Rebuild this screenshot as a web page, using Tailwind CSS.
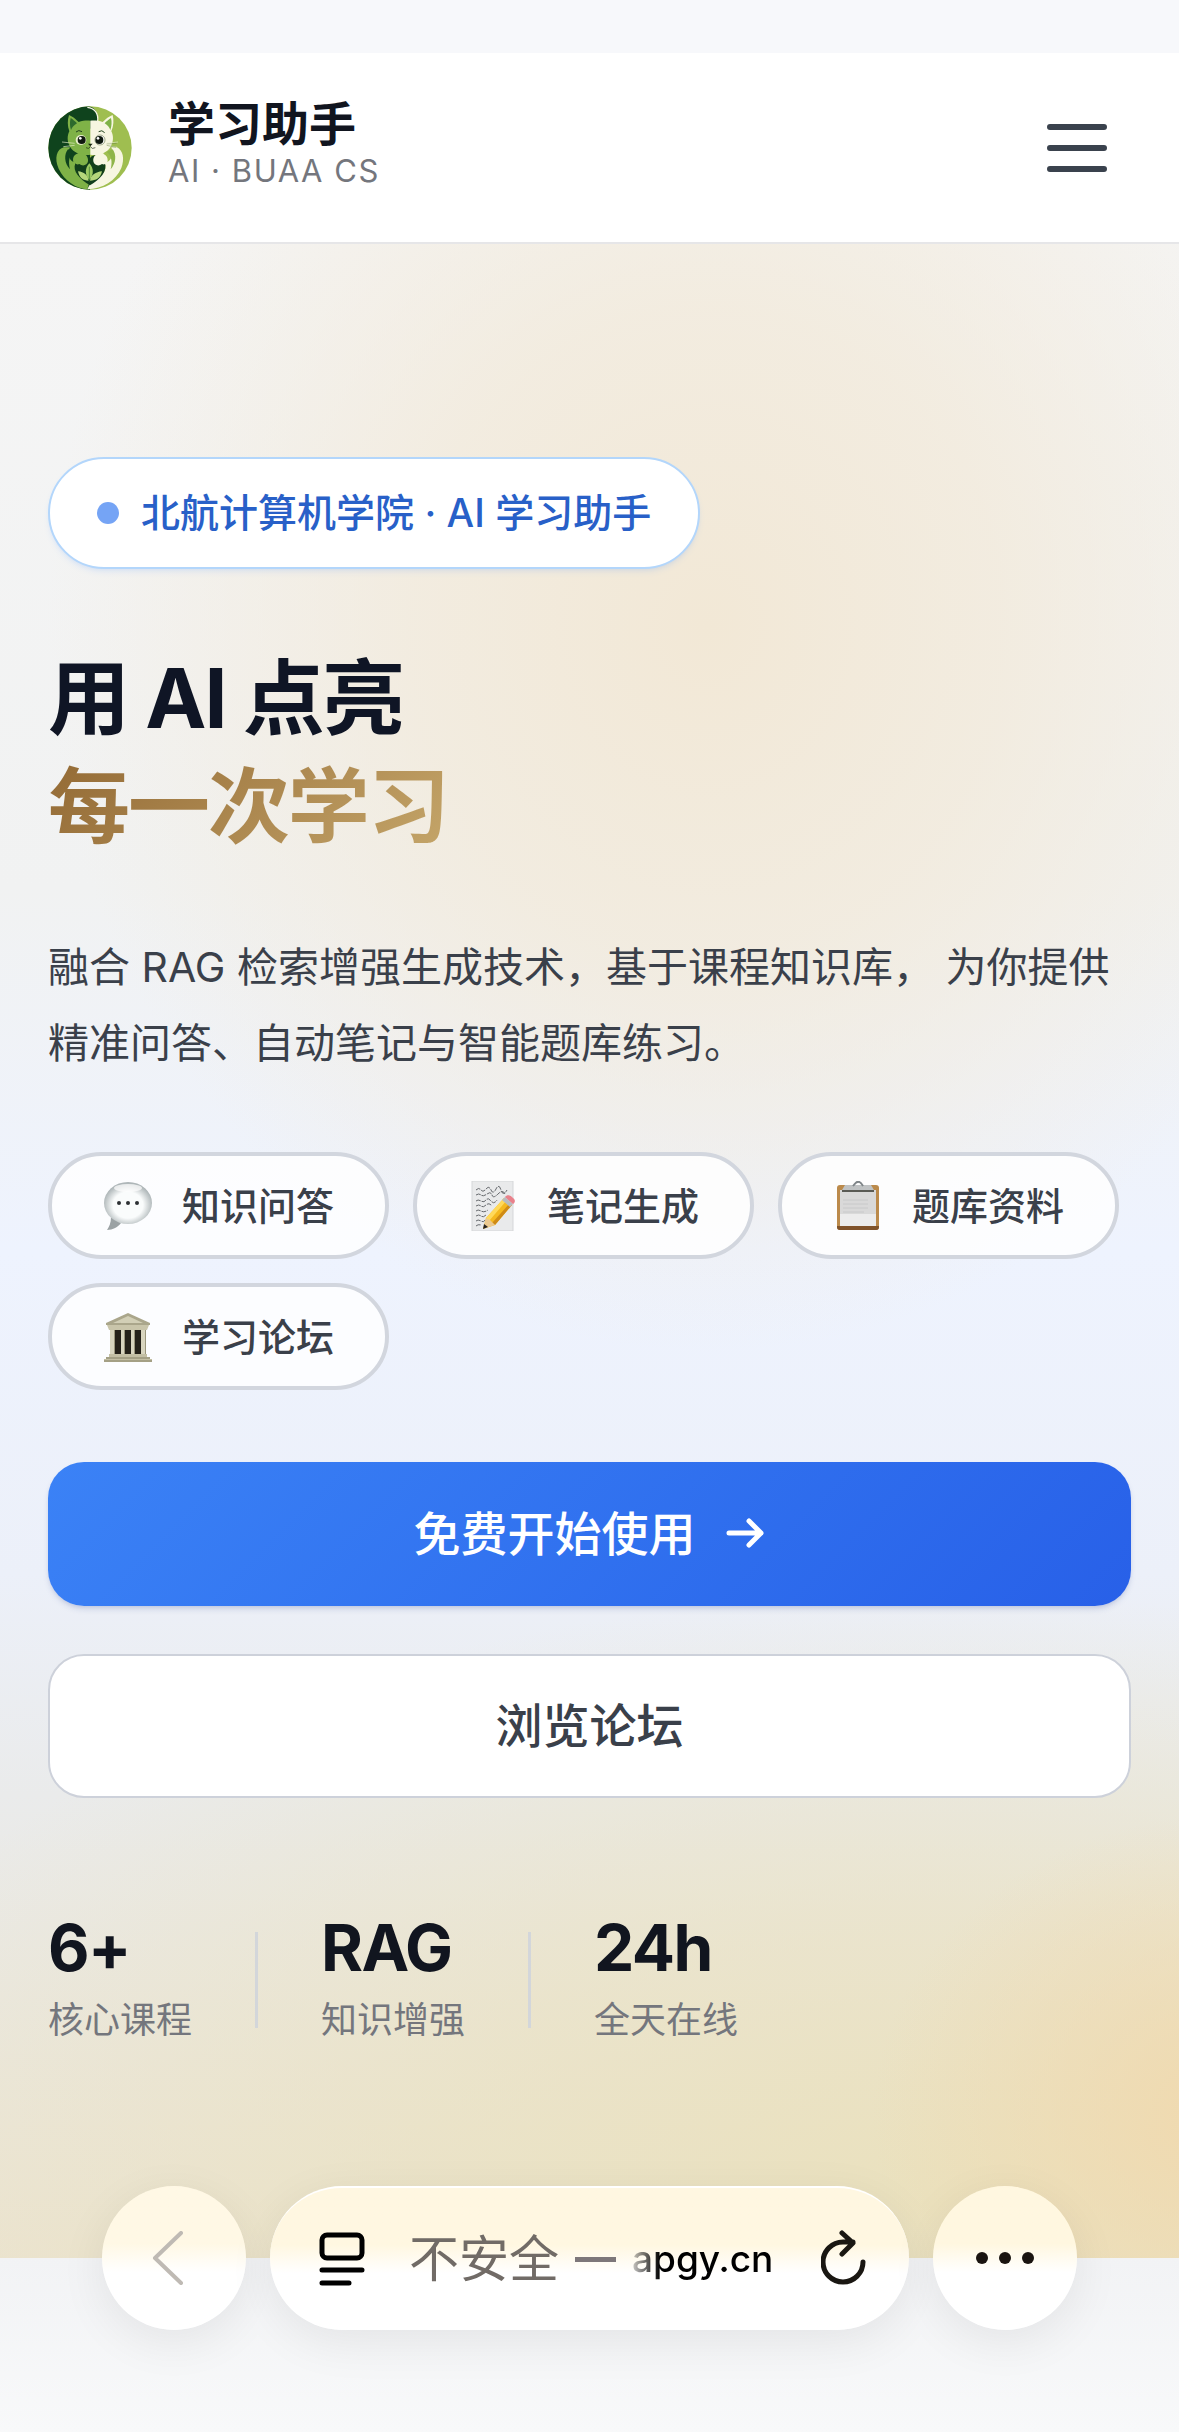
<!DOCTYPE html>
<html lang="zh-CN">

<head>
    <meta charset="utf-8">
    <meta name="viewport" content="width=device-width, initial-scale=1">
    <title>学习助手 - AI · BUAA CS</title>
    <script src="https://cdn.jsdelivr.net/npm/@tailwindcss/browser@4"></script>
</head>

<body class="min-h-screen bg-[#f7f8fb] font-['Inter','Noto_Sans_CJK_SC',sans-serif] text-[#11151f]">
    <!-- Status bar area -->
    <div class="h-[53px] bg-[#f7f8fb]"></div>

    <!-- Header -->
    <header class="flex items-center justify-between border-b-2 border-[#e6e6e8] bg-white h-[191px] px-12">
        <a href="#" class="flex items-center gap-9">
            <svg class="w-[84px] h-[84px]" viewBox="0 0 252 252" aria-hidden="true">
                <defs>
                    <clipPath id="logoClip"><circle cx="126" cy="126" r="125" /></clipPath>
                </defs>
                <g clip-path="url(#logoClip)">
                    <rect width="252" height="252" fill="#9fbe50" />
                    <path d="M0 0H120C142 4 152 22 148 44L126 70V252H0Z" fill="#0f431d" />
                    <path d="M118 4C140 6 152 22 149 46" fill="none" stroke="#f6f6e4" stroke-width="4" />
                    <!-- green half -->
                    <path d="M48 124C26 128 18 158 32 188C50 226 84 246 118 250L126 222C96 214 80 196 82 176L120 170C122 150 112 142 98 142C82 142 72 152 76 168C60 160 58 140 66 124Z" fill="#7fb247" />
                    <path d="M60 130C48 144 48 172 66 190C60 166 64 146 78 134Z" fill="#0f431d" />
                    <path d="M63 27C72 30 84 40 92 48C104 44 116 43 127 44V146C104 150 78 142 66 122C56 104 58 88 64 76C58 60 58 42 63 27Z" fill="#7fb247" />
                    <path d="M68 36C74 40 82 46 87 52C78 58 72 64 69 72C65 60 65 48 68 36Z" fill="#2d6a2d" />
                    <!-- cream half -->
                    <path d="M206 124C226 132 230 160 220 186C204 224 164 248 118 250C124 238 128 230 134 222C160 214 176 196 172 176L136 172C132 154 142 146 156 144C172 142 182 152 178 168C194 160 196 140 190 124Z" fill="#f7f6e1" />
                    <path d="M194 130C206 146 204 172 188 190C194 166 190 148 176 138Z" fill="#8fb54a" />
                    <path d="M194 27C184 30 172 40 164 48C152 44 140 43 127 44V146C150 150 176 142 188 122C198 104 196 88 190 76C197 60 198 42 194 27Z" fill="#f7f6e1" />
                    <path d="M189 36C183 40 175 46 170 52C179 58 184 64 187 72C191 60 192 48 189 36Z" fill="#7fb247" />
                    <!-- heart with leaves -->
                    <path d="M126 156C136 142 160 146 170 168C180 196 156 220 126 238C96 220 72 196 82 172C92 148 116 142 126 156Z" fill="#123f1b" />
                    <path d="M90 142C108 138 122 150 120 166C118 178 104 182 94 174C86 178 78 172 78 162Z" fill="#7fb247" />
                    <path d="M166 142C148 138 134 150 136 166C138 178 152 182 162 174C170 178 178 172 178 162Z" fill="#f7f6e1" />
                    <path d="M124 172C110 188 110 206 124 222C138 206 138 188 124 172Z" fill="#9cca62" />
                    <path d="M90 196C94 216 106 224 122 224C120 206 108 198 90 196ZM162 196C158 216 144 224 126 224C128 206 144 198 162 196Z" fill="#b5d67b" />
                    <path d="M124 182V228" stroke="#33702c" stroke-width="2" />
                    <!-- face -->
                    <ellipse cx="99" cy="102" rx="16" ry="15" fill="#e9f0cd" />
                    <ellipse cx="156" cy="102" rx="15" ry="15" fill="#fff" stroke="#6e7d52" stroke-width="2" />
                    <circle cx="101" cy="102" r="12" fill="#10190f" />
                    <circle cx="154" cy="102" r="12" fill="#10190f" />
                    <circle cx="97" cy="97" r="4" fill="#fff" />
                    <circle cx="150" cy="97" r="4" fill="#fff" />
                    <path d="M84 78Q92 70 102 77M152 77Q162 70 170 80" fill="none" stroke="#26461f" stroke-width="3" />
                    <path d="M120 113H134L127 121Z" fill="#17250f" />
                    <path d="M114 125Q122 131 127 122Q132 131 142 125" fill="none" stroke="#17250f" stroke-width="2" />
                    <path d="M80 112L42 108M80 118L46 122M176 112L210 108M176 118L208 124" stroke="#e4ebc5" stroke-width="2" />
                    <path d="M176 114L206 112M176 118L204 124" stroke="#52663a" stroke-width="1" />
                </g>
            </svg>
            <span class="flex flex-col pb-2">
                <span class="text-[47px] leading-[54px] font-bold">学习助手</span>
                <span class="text-[31px] leading-10 tracking-wider text-[#74767d]">AI · BUAA CS</span>
            </span>
        </a>
        <button type="button" aria-label="菜单" class="mr-6">
            <svg class="w-[60px] h-[48px]" viewBox="0 0 60 48" fill="none" stroke="#3a424d" stroke-width="6" stroke-linecap="round">
                <path d="M3 3H57M3 24H57M3 45H57" />
            </svg>
        </button>
    </header>

    <!-- Hero -->
    <main class="flex flex-col px-12 pt-[213px] pb-[206px] bg-[#ecf0f9] bg-[radial-gradient(ellipse_56%_36%_at_60%_19%,#f2e8d6_0%,#f2eadbcc_45%,#f2eadb00_100%),radial-gradient(ellipse_30%_15%_at_104%_93%,#f0d9ae_0%,#f0d9ae00_100%),radial-gradient(ellipse_100%_30%_at_80%_97%,#eae1be_0%,#eae1be99_45%,#eae1be00_100%),linear-gradient(180deg,#f5f5f5_0%,#f1f2f2_32%,#eef3fe_50%,#ecf0f9_66%,#eaebeb_77%,#ebe4d2_100%)]">
        <div class="flex items-center self-start gap-[22px] h-28 px-[47px] bg-white border-2 border-[#b3d6fb] rounded-full shadow-md shadow-blue-500/10">
            <span class="size-[22px] rounded-full bg-[#75a4f5]"></span>
            <span class="text-[39px] leading-[56px] font-medium text-[#2860c8]">北航计算机学院 · AI 学习助手</span>
        </div>

        <h1 class="mt-[76px] text-[82px] leading-[108px] font-bold tracking-tight text-[#0f1525]">
            用 AI 点亮<br>
            <span class="bg-linear-135 from-[#936a35] to-[#c5a66a] bg-clip-text text-transparent">每一次学习</span>
        </h1>

        <p class="mt-[68px] text-[41px] leading-[76px] text-[#3a404a]">
            融合 RAG 检索增强生成技术，基于课程知识库， 为你提供精准问答、自动笔记与智能题库练习。
        </p>

        <ul class="mt-[71px] flex flex-wrap gap-6 text-[38px] leading-[56px] font-medium text-[#3a404a]">
            <li class="flex items-center gap-[29px] h-[107px] px-[51px] bg-white/85 border-4 border-[#d2d6de] rounded-full">
                <svg class="size-[50px]" viewBox="0 0 50 50" aria-hidden="true">
                    <defs>
                        <radialGradient id="bubble" cx="50%" cy="55%" r="52%">
                            <stop offset="60%" stop-color="#fafcfc" />
                            <stop offset="100%" stop-color="#aeb6b8" />
                        </radialGradient>
                    </defs>
                    <path d="M8 36C8 42 6 46 4 49C10 49 15 46 18 42Z" fill="#9ba2a4" />
                    <ellipse cx="25" cy="22" rx="24" ry="21" fill="url(#bubble)" />
                    <ellipse cx="25" cy="7" rx="14" ry="4" fill="#fff" opacity="0.7" />
                    <circle cx="16" cy="22" r="2" fill="#2c3033" />
                    <circle cx="25" cy="22" r="2" fill="#2c3033" />
                    <circle cx="34" cy="22" r="2" fill="#2c3033" />
                </svg>
                知识问答
            </li>
            <li class="flex items-center gap-[29px] h-[107px] px-[51px] bg-white/85 border-4 border-[#d2d6de] rounded-full">
                <svg class="size-[50px]" viewBox="0 0 50 50" aria-hidden="true">
                    <rect x="4" y="0" width="41" height="50" fill="#e9eaeb" stroke="#d5d7d9" />
                    <path d="M8 9q3-3 5 0t5-1t5 1t5-1t5 1t6 0M8 14q3-2 5 0t6-1t5 1t6-1t7 0M8 20q2-2 5 0t5-1t5 1t6-1M8 25q3-2 5 0t5-1t6 1M8 30q2-2 5 0t7-1M8 35q3-2 5 0t5-1M8 40q2-2 5 0t4-1M8 45q2-2 5-1" fill="none" stroke="#66696d" stroke-width="1" stroke-dasharray="5 1" />
                    <path d="M15 48L18 37L36 17L44 24L27 44Z" fill="#f5b91f" />
                    <path d="M18 37L36 17L39 19L21 40Z" fill="#ffd95a" />
                    <path d="M24 42L42 22L44 24L27 44Z" fill="#cf8b16" />
                    <path d="M15 48L18 37L22 39L27 44Z" fill="#ecc98e" />
                    <path d="M15 48L16 43L20 46Z" fill="#26221e" />
                    <path d="M34 19L37 16L45 23L42 26Z" fill="#b7bcc0" />
                    <path d="M37 16C39 13 43 14 45 17C48 19 47 22 45 23Z" fill="#e9818b" />
                </svg>
                笔记生成
            </li>
            <li class="flex items-center gap-[29px] h-[107px] px-[51px] bg-white/85 border-4 border-[#d2d6de] rounded-full">
                <svg class="size-[50px]" viewBox="0 0 50 50" aria-hidden="true">
                    <rect x="4" y="4" width="42" height="45" rx="3" fill="#bb8a4b" />
                    <path d="M4 45H46V46Q46 49 43 49H7Q4 49 4 46Z" fill="#80532a" />
                    <rect x="7" y="9" width="36" height="36" fill="#d9d9d9" />
                    <path d="M7 33H43V45H7Z" fill="#ececec" />
                    <path d="M10 19H35M10 23H35M10 27H35M10 31H31" stroke="#c8c9ca" stroke-width="1" />
                    <path d="M12 4H38L41 9H9Z" fill="#bfc2c3" />
                    <path d="M9 10H41" stroke="#5a5b55" stroke-width="2" />
                    <path d="M20 5Q24 0 25 1Q27 0 30 5" fill="none" stroke="#7f8588" stroke-width="2" />
                </svg>
                题库资料
            </li>
            <li class="flex items-center gap-[29px] h-[107px] px-[51px] bg-white/85 border-4 border-[#d2d6de] rounded-full">
                <svg class="size-[50px]" viewBox="0 0 50 50" aria-hidden="true">
                    <path d="M7 18H43V43H7Z" fill="#25221a" />
                    <path d="M25 1L47 11V13H3V11Z" fill="#aaa68b" />
                    <path d="M25 4L40 11H10Z" fill="#d2cfb6" />
                    <path d="M4 13H46L44 18H6Z" fill="#c9c5aa" />
                    <path d="M7 18H12V43H7ZM18 18H22V43H18ZM28 18H32V43H28ZM38 18H43V43H38Z" fill="#d8d5bf" />
                    <path d="M11 18H12V43H11ZM21 18H22V43H21ZM31 18H32V43H31ZM42 18H43V43H42Z" fill="#9a967c" />
                    <path d="M6 42H44V45H47V47H49V50H1V47H3V45H6Z" fill="#c3bfa4" />
                    <path d="M3 46H47M1 49H49" stroke="#858166" stroke-width="1" />
                </svg>
                学习论坛
            </li>
        </ul>

        <div class="mt-[72px] flex flex-col gap-12 text-[47px] leading-[64px] font-medium">
            <button type="button" class="flex items-center justify-center gap-7 h-36 w-full rounded-[36px] bg-linear-135 from-[#3b82f6] to-[#2860e8] text-white shadow-md shadow-blue-900/15">
                免费开始使用
                <svg class="size-[42px]" viewBox="0 0 42 42" fill="none" stroke="currentColor" stroke-width="5" stroke-linecap="round" stroke-linejoin="round" aria-hidden="true">
                    <path d="M5 20H37M25 8L37 20L25 32" />
                </svg>
            </button>
            <button type="button" class="h-36 w-full rounded-[36px] border-2 border-[#cdd1da] bg-white text-[#3a404a]">浏览论坛</button>
        </div>

        <dl class="mt-[110px] flex items-center gap-[63px]">
            <div class="flex flex-col-reverse">
                <dt class="text-4xl leading-[64px] text-[#74767d]">核心课程</dt>
                <dd class="text-[64px] leading-[80px] font-bold tracking-tight">6+</dd>
            </div>
            <div class="w-[3px] h-24 bg-[#d3d6da]"></div>
            <div class="flex flex-col-reverse">
                <dt class="text-4xl leading-[64px] text-[#74767d]">知识增强</dt>
                <dd class="text-[64px] leading-[80px] font-bold tracking-tight">RAG</dd>
            </div>
            <div class="w-[3px] h-24 bg-[#d3d6da]"></div>
            <div class="flex flex-col-reverse">
                <dt class="text-4xl leading-[64px] text-[#74767d]">全天在线</dt>
                <dd class="text-[64px] leading-[80px] font-bold tracking-tight">24h</dd>
            </div>
        </dl>
    </main>

    <div class="h-[174px] bg-linear-to-b from-[#f2f3f5] to-[#f8f9fa]"></div>

    <!-- Browser bar -->
    <nav class="fixed inset-x-0 bottom-[102px] flex gap-6 px-[102px]">
        <button type="button" aria-label="返回" class="flex items-center justify-center size-36 shrink-0 pr-3 rounded-full bg-linear-to-b from-[#fff8e5] from-40% to-white to-60% shadow-[0_12px_48px_rgba(0,0,0,0.07)]">
            <svg class="w-[32px] h-[54px]" viewBox="0 0 32 54" fill="none" stroke="#bfbab4" stroke-width="4" stroke-linecap="round" stroke-linejoin="round">
                <path d="M29 2L3 27L29 52" />
            </svg>
        </button>
        <div class="flex flex-1 items-center h-36 pl-[49px] pr-[42px] rounded-full border-t-2 border-white bg-linear-to-b from-[#fff7e1] from-40% to-white to-60% shadow-[0_12px_48px_rgba(0,0,0,0.07)]">
            <svg class="w-[46px] h-[54px]" viewBox="0 0 46 54" fill="none" stroke="#000" stroke-width="5" stroke-linecap="round" aria-hidden="true">
                <rect x="3" y="3" width="40" height="23" rx="5" />
                <path d="M3 38H43M3 51H30" />
            </svg>
            <span class="ml-[44px] text-[50px] leading-[64px] text-[#716b66]">不安全</span>
            <span class="ml-4 h-[5px] w-[41px] bg-[#7d777a]"></span>
            <span class="ml-4 text-[37px] leading-[64px] font-medium bg-linear-to-r from-black/20 to-black to-20% bg-clip-text text-transparent">apgy.cn</span>
            <button type="button" aria-label="刷新" class="ml-auto">
                <svg class="w-[46px] h-[58px]" viewBox="0 0 46 58" fill="none" stroke="#1a1712" stroke-width="5" stroke-linecap="round" stroke-linejoin="round">
                    <path d="M42 32A20 20 0 1 1 22 12H32M21 3L32 13L21 24" />
                </svg>
            </button>
        </div>
        <button type="button" aria-label="更多" class="flex items-center justify-center size-36 shrink-0 rounded-full bg-linear-to-b from-[#fff7e0] from-40% to-white to-60% shadow-[0_12px_48px_rgba(0,0,0,0.07)]">
            <svg class="w-[60px] h-[14px]" viewBox="0 0 60 14" fill="#1a1410">
                <circle cx="7" cy="7" r="6" />
                <circle cx="30" cy="7" r="6" />
                <circle cx="53" cy="7" r="6" />
            </svg>
        </button>
    </nav>
</body>

</html>
